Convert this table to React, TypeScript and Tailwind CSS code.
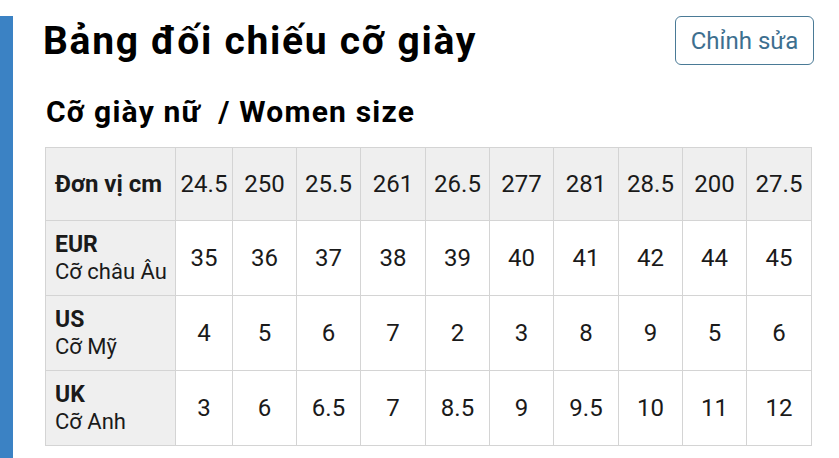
import { type ReactElement } from "react";

type SizeRow = {
  code: string;
  label: string;
  values: string[];
};

const cmValues = ["24.5", "250", "25.5", "261", "26.5", "277", "281", "28.5", "200", "27.5"];

const rows: SizeRow[] = [
  { code: "EUR", label: "Cỡ châu Âu", values: ["35", "36", "37", "38", "39", "40", "41", "42", "44", "45"] },
  { code: "US", label: "Cỡ Mỹ", values: ["4", "5", "6", "7", "2", "3", "8", "9", "5", "6"] },
  { code: "UK", label: "Cỡ Anh", values: ["3", "6", "6.5", "7", "8.5", "9", "9.5", "10", "11", "12"] },
];

const colWidths = [130, 57, 64, 64, 65, 64, 64, 65, 64, 64, 65];

export default function App(): ReactElement {
  return (
    <main className="w-[839px] h-[458px] bg-white flex font-['Roboto','Liberation_Sans',sans-serif] text-[#1a1a1a] overflow-hidden">
      {/* accent bar */}
      <div className="w-[13px] mt-[16px] bg-[#3b82c4] shrink-0" />

      <section className="flex-1 flex flex-col pl-[32px] pr-[25px]">
        {/* header */}
        <header className="flex justify-between items-start pt-[16px]">
          <h1 className="text-[39px] font-bold leading-[52px] -mt-[1px] -ml-[2px] tracking-[1.7px] text-black">
            Bảng đối chiếu cỡ giày
          </h1>
          <button className="w-[139px] h-[49px] border border-[#4a7a96] rounded-[6px] text-[24px] text-[#3d6f8f] flex items-center justify-center">
            Chỉnh sửa
          </button>
        </header>

        <h2 className="text-[30px] font-bold leading-[40px] mt-[25px] ml-[1px] tracking-[1.2px] text-black">
          Cỡ giày nữ&nbsp; / Women size
        </h2>

        {/* size table */}
        <table className="mt-[15px] border-collapse table-fixed w-[766px]">
          <colgroup>
            {colWidths.map((w, i) => (
              <col key={i} style={{ width: w }} />
            ))}
          </colgroup>
          <thead>
            <tr className="h-[73px] bg-[#efefef]">
              <th className="border border-[#d4d4d4] text-left pl-[9px] text-[24px] font-bold">Đơn vị cm</th>
              {cmValues.map((v, i) => (
                <th key={i} className="border border-[#d4d4d4] text-center text-[24px] font-normal">
                  {v}
                </th>
              ))}
            </tr>
          </thead>
          <tbody>
            {rows.map((row) => (
              <tr key={row.code} className="h-[75px]">
                <td className="border border-[#d4d4d4] bg-[#efefef] pl-[9px] text-[22px] leading-[27px]">
                  <div className="font-bold text-[23px]">{row.code}</div>
                  <div>{row.label}</div>
                </td>
                {row.values.map((v, i) => (
                  <td key={i} className="border border-[#d4d4d4] text-center text-[24px]">
                    {v}
                  </td>
                ))}
              </tr>
            ))}
          </tbody>
        </table>
      </section>
    </main>
  );
}
